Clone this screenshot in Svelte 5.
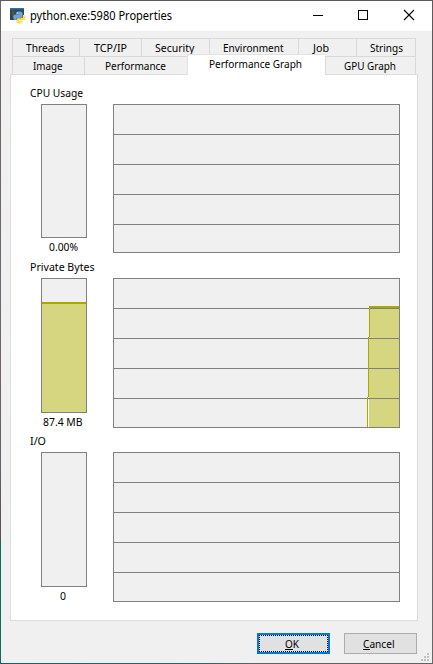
<script>
  const topTabs = [
    { name: 'Threads', w: 67, pad: 13, text: 38.5 },
    { name: 'TCP/IP', w: 62, pad: 13.5, text: 33 },
    { name: 'Security', w: 68, pad: 13, text: 39.5 },
    { name: 'Environment', w: 89, pad: 13, text: 60.5 },
    { name: 'Job', w: 58, pad: 14, text: 16 },
    { name: 'Strings', w: 60, pad: 13, text: 33 }
  ];
  const bottomTabs = [
    { name: 'Image', w: 72, pad: 19.5, text: 29.5 },
    { name: 'Performance', w: 103, pad: 20, text: 61 },
    { name: 'Performance Graph', w: 138, pad: 20.5, text: 93, active: true },
    { name: 'GPU Graph', w: 91, pad: 18, text: 52 }
  ];
  const meters = [
    { name: 'CPU Usage', tw: 53, value: '0.00%', vw: 29, meter: 134, graph: 149 },
    { name: 'Private Bytes', tw: 64.5, value: '87.4 MB', vw: 39.5, meter: 135, graph: 150, used: 110 },
    { name: 'I/O', tw: 16, value: '0', vw: 6, meter: 135, graph: 150 }
  ];
  const gridLines = [30, 60, 90, 120];
</script>

{#snippet label(text, width)}
  <svg class="label" {width} height="14">
    <text x="0" y="11" textLength={width} lengthAdjust="spacingAndGlyphs">{text}</text>
  </svg>
{/snippet}

{#snippet tab(t)}
  <div class="tab" class:active={t.active} style="width: {t.w}px; padding-left: {t.pad}px">
    {@render label(t.name, t.text)}
  </div>
{/snippet}

<div class="frame">
  <div class="window">
    <header>
      <svg class="app-icon" width="16" height="16" viewBox="0 0 16 16">
        <rect x="0" y="0" width="14" height="12" fill="#3d4449" />
        <rect x="0" y="0" width="14" height="1.500" fill="#1874c4" />
        <path d="M2 4h3M2 6h2M2 8h2" stroke="#39795a" fill="none" />
        <path d="M6 5.500C6 4 7.300 3.500 9.200 3.500S12.600 4 12.600 5.500V8c0 1.200-.8 1.900-1.900 1.900H8C6.700 9.900 6 10.600 6 12H5.300C4 12 3.300 10.700 3.300 9.300s.7-2.700 2.200-2.700H9.300V6.200H6Z" fill="#69a5d5" />
        <path d="M13 6.900h.7c1.400 0 2 1.100 2 2.600s-.6 2.600-2 2.600H9.800v.4H12.800v1c0 1.400-1.300 2.200-3.100 2.200S6.500 14.800 6.500 13.500V12C6.500 10.900 7.200 10.300 8.300 10.300H11c1.200 0 2-.8 2-2Z" fill="#ffdc5c" />
        <circle cx="7.800" cy="4.900" r=".5" fill="#fff" />
        <circle cx="11.200" cy="14.100" r=".5" fill="#fff" />
      </svg>
      <svg class="title" width="142" height="18">
        <text x="0" y="13" textLength="142" lengthAdjust="spacingAndGlyphs">python.exe:5980 Properties</text>
      </svg>
      <svg class="controls" width="102" height="12" viewBox="0 0 102 12">
        <rect x="0" y="5" width="10" height="1" />
        <rect x="45.500" y="0.500" width="9" height="9" fill="none" stroke="#000" />
        <path d="M91 0L101 10M101 0L91 10" fill="none" stroke="#000" stroke-width="1.1" />
      </svg>
    </header>

    <nav>
      <div class="row">
        {#each topTabs as t}{@render tab(t)}{/each}
      </div>
      <div class="row">
        {#each bottomTabs as t}{@render tab(t)}{/each}
      </div>
    </nav>

    <main>
      {#each meters as m}
        <section>
          <div class="name">{@render label(m.name, m.tw)}</div>
          <div class="charts">
            <div class="gauge">
              <div class="bar" style="height: {m.meter}px">
                {#if m.used}<div class="fill" style="height: {m.used}px"></div>{/if}
              </div>
              <div class="value">{@render label(m.value, m.vw)}</div>
            </div>
            <svg class="graph" width="287" height={m.graph} shape-rendering="crispEdges">
              <rect width="287" height={m.graph} fill="#f0f0f0" />
              {#if m.used}
                <rect x="256" y="28" width="30" height="121" fill="#d6d680" />
                <rect x="255" y="120" width="1" height="29" fill="#fff" />
              {/if}
              {#each gridLines as y}
                <rect x="0" {y} width="287" height="1" fill="#808080" />
              {/each}
              {#if m.used}
                <rect x="256" y="28" width="31" height="2" fill="#a8a800" />
                <rect x="256" y="28" width="1" height="31" fill="#a8a800" />
                <rect x="255" y="59" width="1" height="60" fill="#a8a800" />
                <rect x="254" y="119" width="1" height="30" fill="#a8a800" />
              {/if}
              <rect x="0.5" y="0.5" width="286" height={m.graph - 1} fill="none" stroke="#808080" />
            </svg>
          </div>
        </section>
      {/each}
    </main>

    <footer>
      <button class="ok">
        <span class="focus">{@render label('OK', 14)}<i></i></span>
      </button>
      <button class="cancel">{@render label('Cancel', 31.5)}<i></i></button>
      <svg class="grip" width="8" height="8" fill="#bfbfbf">
        <path d="M6 0h2v2h-2zM3 3h2v2h-2zM6 3h2v2h-2zM0 6h2v2h-2zM3 6h2v2h-2zM6 6h2v2h-2z" />
      </svg>
    </footer>
  </div>
</div>

<style>
  :global(body) { margin: 0; overflow: hidden; }
  .frame {
    box-sizing: border-box;
    width: 433px;
    height: 664px;
    padding: 1px;
    background:
      linear-gradient(#5c5c5c, #5c5c5c) 0 0 / 433px 1px no-repeat,
      linear-gradient(90deg, #17625f, #266663 45%, #626262 60%, #626262) 0 663px / 433px 1px no-repeat,
      linear-gradient(#6c6365 0 15%, #776461 20%, #69687a 45%, #77605e 55%, #626174 70%, #654b50 81%, #136864 81.2%) 0 0 / 1px 664px no-repeat,
      linear-gradient(#62595b, #514e55 40%, #5d565a 70%, #696969) 432px 0 / 1px 664px no-repeat;
    font-family: "Noto Sans", "Open Sans", sans-serif;
    font-size: 11px;
    color: #000;
  }
  .window {
    display: flex;
    flex-direction: column;
    width: 431px;
    height: 662px;
    background: #f0f0f0;
  }
  svg { display: block; overflow: visible; flex: none; }
  header {
    display: flex;
    flex: none;
    height: 30px;
    background: #fff;
  }
  .app-icon { margin: 7px 0 0 9px; }
  .title { margin: 6px 0 0 4px; font-size: 12px; }
  .controls { margin: 9px 0 0 141px; }
  nav { flex: none; padding: 7px 0 0 11px; }
  .row { display: flex; height: 18px; }
  .tab {
    box-sizing: border-box;
    height: 18px;
    padding-top: 2px;
    border: solid #d9d9d9;
    border-width: 1px 0 0 1px;
  }
  .tab:last-child { border-right-width: 1px; }
  .tab.active {
    position: relative;
    z-index: 1;
    height: 21px;
    margin-top: -2px;
    background: #fff;
    border-color: #e2e2e2;
  }
  main {
    box-sizing: border-box;
    flex: none;
    width: 408px;
    height: 547px;
    margin-left: 9px;
    padding: 11px 0 0 19px;
    border: 1px solid #dcdcdc;
    background: #fff;
  }
  section { height: 174px; }
  .name { height: 18px; }
  .charts { display: flex; gap: 26px; padding-left: 11px; }
  .bar {
    box-sizing: border-box;
    display: flex;
    flex-direction: column;
    justify-content: flex-end;
    width: 46px;
    border: 1px solid #808080;
    background: #f0f0f0;
  }
  .fill {
    box-sizing: border-box;
    border-top: 2px solid #a8a800;
    background: #d6d680;
  }
  .value { display: flex; justify-content: center; padding: 2px 2px 0 0; }
  footer {
    box-sizing: border-box;
    display: flex;
    flex: none;
    height: 42px;
    padding: 12px 0 0 256px;
  }
  button {
    box-sizing: border-box;
    display: flex;
    width: 73px;
    height: 21px;
    margin: 0;
    padding: 0;
    border: 1px solid #adadad;
    background: #e1e1e1;
    font: inherit;
    color: #000;
    position: relative;
  }
  .ok { border: 2px solid #0078d7; }
  .focus {
    box-sizing: border-box;
    width: 69px;
    height: 17px;
    padding: 1px 0 0 25px;
    border: 1px dotted #000;
  }
  .cancel { margin-left: 14px; padding: 3px 0 0 18px; }
  i {
    position: absolute;
    left: 26px;
    top: 14px;
    width: 8px;
    height: 1px;
    background: #000;
  }
  .cancel i { left: 18px; top: 15px; width: 7px; }
  .grip { margin: 20px 0 0 4px; }
</style>
